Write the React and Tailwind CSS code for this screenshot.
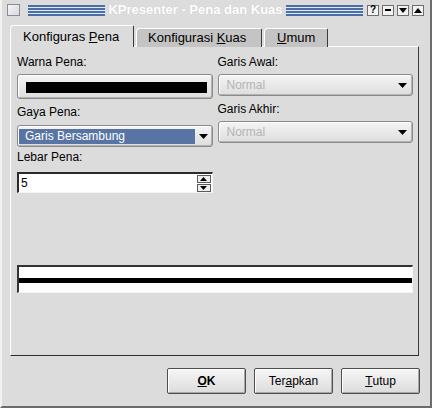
import React from "react";

const F = "font-['Liberation_Sans',Arial,sans-serif]";

function Stripes() {
  return (
    <div className="flex-1 flex flex-col gap-px bg-[#e4eaf3]">
      <div className="h-[2px] bg-[#4a6ea8]" />
      <div className="h-[2px] bg-[#4a6ea8]" />
      <div className="h-[2px] bg-[#4a6ea8]" />
      <div className="h-[2px] bg-[#4a6ea8]" />
    </div>
  );
}

function TBtn({ children }) {
  return (
    <div className="w-[12px] h-[11px] border border-[#6e6e6e] bg-[#f2f2f2] flex items-center justify-center">
      {children}
    </div>
  );
}

function Down({ w = 9, h = 5, color = "#000" }) {
  return (
    <svg width={w} height={h} viewBox={`0 0 ${w} ${h}`}>
      <polygon points={`0,0 ${w},0 ${w / 2},${h}`} fill={color} />
    </svg>
  );
}
function Up({ w = 9, h = 5, color = "#000" }) {
  return (
    <svg width={w} height={h} viewBox={`0 0 ${w} ${h}`}>
      <polygon points={`0,${h} ${w},${h} ${w / 2},0`} fill={color} />
    </svg>
  );
}

const raised =
  "border border-[#8a8a8a] rounded-[3px] bg-[linear-gradient(to_bottom,#f4f4f4,#dedede)] shadow-[inset_1px_1px_0_#ffffff,inset_-1px_-1px_0_#b4b4b4]";

function Label({ children, className = "" }) {
  return <div className={`text-[12px] leading-[14px] text-black ${className}`}>{children}</div>;
}

function DisabledCombo({ className = "" }) {
  return (
    <div className={`h-[22px] flex items-center ${raised} ${className}`}>
      <span className="flex-1 pl-[8px] text-[12px] text-[#b4b4b4]">Normal</span>
      <div className="w-[17px] flex items-center justify-center pr-[2px]">
        <Down />
      </div>
    </div>
  );
}

function Button({ children, bold = false }) {
  return (
    <div
      className={`w-[79px] h-[26px] flex items-center justify-center border border-[#4e4e4e] rounded-[2px] bg-[linear-gradient(to_bottom,#f6f6f6,#dcdcdc)] shadow-[inset_1px_1px_0_#ffffff,inset_-1px_-1px_0_#a8a8a8] text-[12px] text-black ${
        bold ? "font-bold" : ""
      }`}
    >
      {children}
    </div>
  );
}

export default function App() {
  return (
    <div
      className={`${F} w-[432px] h-[408px] bg-[#dcdcdc] flex flex-col border-l-2 border-l-[#f2f2f2] border-r-2 border-r-[#6c6c6c] border-b-2 border-b-[#6c6c6c] select-none`}
    >
      {/* Title bar */}
      <div className="h-[20px] flex items-center pl-[5px] pr-[6px]">
        <div className="w-[13px] h-[12px] border border-[#8c8c8c] bg-[linear-gradient(135deg,#f6f6fa,#d8d8e4)]" />
        <div className="w-[8px]" />
        <Stripes />
        <div className="px-[3px] text-[13px] leading-[16px] font-bold text-white [text-shadow:0_0_1px_#c4c4c4]">
          KPresenter - Pena dan Kuas
        </div>
        <Stripes />
        <div className="flex gap-[3px] ml-[4px]">
          <TBtn>
            <span className="text-[10px] leading-[10px] font-bold text-black">?</span>
          </TBtn>
          <TBtn>
            <div className="w-[6px] h-[2px] bg-black" />
          </TBtn>
          <TBtn>
            <Down w={8} h={5} />
          </TBtn>
          <TBtn>
            <Up w={8} h={5} />
          </TBtn>
        </div>
      </div>

      {/* Tabs + panel */}
      <div className="ml-[8px] mr-[11px] mt-[5px]">
        <div className="flex items-end h-[22px] gap-[2px]">
          <div className="relative z-10 w-[124px] h-[22px] bg-[#dcdcdc] border-l border-t border-white border-r border-r-[#3a3a3a] rounded-tl-[3px] rounded-tr-[2px] pl-[12px] pt-[3px] text-[13px] leading-[15px] text-black">
            Konfiguras <span className="underline">P</span>ena
          </div>
          <div className="w-[126px] h-[19px] bg-[#c4c4c4] border-l border-t border-white border-r border-r-[#3a3a3a] rounded-tl-[4px] rounded-tr-[2px] pl-[11px] pt-[1px] text-[13px] leading-[15px] text-black">
            Konfigurasi <span className="underline">K</span>uas
          </div>
          <div className="w-[64px] h-[19px] bg-[#c4c4c4] border-l border-t border-white border-r border-r-[#3a3a3a] rounded-tl-[4px] rounded-tr-[2px] pl-[12px] pt-[1px] text-[13px] leading-[15px] text-black">
            <span className="underline">U</span>mum
          </div>
        </div>
        <div className="-mt-px h-[310px] border-l border-t border-white border-r border-b border-r-[#3a3a3a] border-b-[#2e2e2e] pl-[6px] pr-[5px] pt-[8px]">
          <div className="grid grid-cols-2 gap-x-[5px]">
            {/* Left column */}
            <div className="flex flex-col">
              <Label>Warna Pena:</Label>
              <div className={`mt-[5px] h-[25px] ${raised} pl-[8px] pr-[5px] pt-[7px]`}>
                <div className="h-[11px] bg-black" />
              </div>
              <Label className="mt-[6px]">Gaya Pena:</Label>
              <div className={`mt-[6px] h-[22px] flex items-center ${raised} pl-[1px]`}>
                <div className="flex-1 h-[15px] bg-[#5874a4] text-white text-[12px] leading-[15px] pl-[6px]">
                  Garis Bersambung
                </div>
                <div className="w-[17px] flex items-center justify-center">
                  <Down />
                </div>
              </div>
              <Label className="mt-[3px]">Lebar Pena:</Label>
              <div className="mt-[8px] h-[21px] flex items-center bg-white border-t-2 border-l-2 border-t-[#2a2a2a] border-l-[#2a2a2a] border-b border-r border-b-[#f4f4f4] border-r-[#f4f4f4]">
                <span className="flex-1 pl-[2px] text-[12px] text-black">5</span>
                <div className="flex flex-col gap-px mr-px">
                  <div className="w-[14px] h-[8px] border border-[#5a5a5a] bg-[#eeeeee] flex items-center justify-center">
                    <Up w={7} h={4} />
                  </div>
                  <div className="w-[14px] h-[8px] border border-[#5a5a5a] bg-[#eeeeee] flex items-center justify-center">
                    <Down w={7} h={4} />
                  </div>
                </div>
              </div>
            </div>
            {/* Right column */}
            <div className="flex flex-col">
              <Label>Garis Awal:</Label>
              <DisabledCombo className="mt-[5px]" />
              <Label className="mt-[6px]">Garis Akhir:</Label>
              <DisabledCombo className="mt-[5px]" />
            </div>
          </div>
          {/* Preview */}
          <div className="mt-[72px] w-[396px] h-[28px] bg-white border-t-2 border-l-2 border-t-[#333333] border-l-[#333333] border-b border-r border-b-[#f4f4f4] border-r-[#f4f4f4] pt-[11px]">
            <div className="h-[5px] bg-black" />
          </div>
        </div>
      </div>

      {/* Buttons */}
      <div className="mt-[12px] flex justify-end gap-[8px] pr-[10px]">
        <Button bold>
          <span className="underline">O</span>K
        </Button>
        <Button>
          Ter<span className="underline">a</span>pkan
        </Button>
        <Button>
          <span className="underline">T</span>utup
        </Button>
      </div>
    </div>
  );
}
